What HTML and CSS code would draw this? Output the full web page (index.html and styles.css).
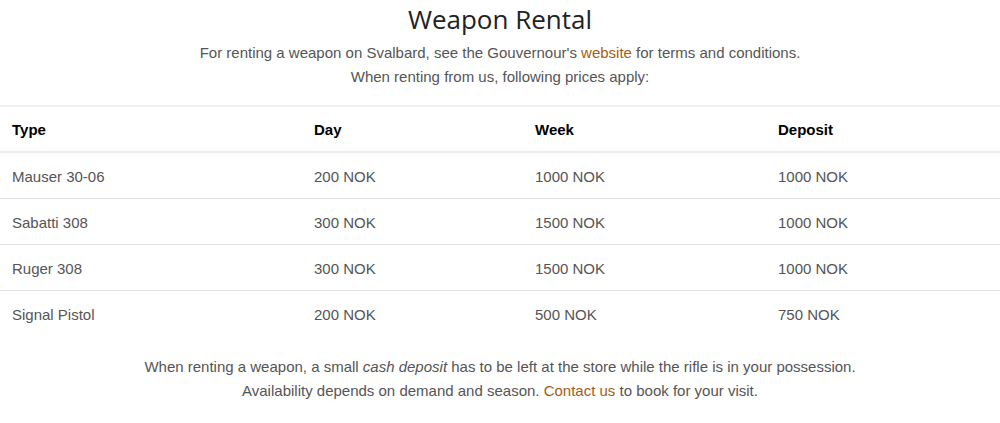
FILE: index.html
```html
<!DOCTYPE html>
<html lang="en">
<head>
<meta charset="utf-8">
<title>Weapon Rental</title>
<link rel="stylesheet" href="styles.css">
</head>
<body>
<section class="rental">
  <h1 class="title">Weapon Rental</h1>
  <p class="intro">For renting a weapon on Svalbard, see the Gouvernour's <a href="#" class="link">website</a> for terms and conditions.<br>When renting from us, following prices apply:</p>
  <table class="prices">
    <colgroup>
      <col class="c1"><col class="c2"><col class="c3"><col class="c4">
    </colgroup>
    <thead>
      <tr><th>Type</th><th>Day</th><th>Week</th><th>Deposit</th></tr>
    </thead>
    <tbody>
      <tr><td>Mauser 30-06</td><td>200 NOK</td><td>1000 NOK</td><td>1000 NOK</td></tr>
      <tr><td>Sabatti 308</td><td>300 NOK</td><td>1500 NOK</td><td>1000 NOK</td></tr>
      <tr><td>Ruger 308</td><td>300 NOK</td><td>1500 NOK</td><td>1000 NOK</td></tr>
      <tr><td>Signal Pistol</td><td>200 NOK</td><td>500 NOK</td><td>750 NOK</td></tr>
    </tbody>
  </table>
  <p class="outro">When renting a weapon, a small <em>cash deposit</em> has to be left at the store while the rifle is in your possession.<br>Availability depends on demand and season. <a href="#" class="link">Contact us</a> to book for your visit.</p>
</section>
</body>
</html>
```

FILE: styles.css
```css
html, body {
  margin: 0;
  padding: 0;
  background: #fff;
}
body {
  font-family: "Liberation Sans", Arial, sans-serif;
  font-size: 15px;
  color: #555;
}
.rental {
  display: flex;
  flex-direction: column;
  align-items: stretch;
}
.title {
  margin: 3px 0 0;
  font-family: "Open Sans", sans-serif;
  font-weight: 400;
  font-size: 26px;
  line-height: 32px;
  color: #222;
  text-align: center;
}
.intro, .outro {
  margin: 0;
  text-align: center;
  line-height: 24px;
}
.intro {
  margin-top: 6px;
}
.link {
  color: #a65c12;
  text-decoration: none;
}
.prices {
  width: 100%;
  border-collapse: collapse;
  margin-top: 16px;
}
.c1 { width: 302px; }
.c2 { width: 221px; }
.c3 { width: 243px; }
.c4 { width: 234px; }
.prices th, .prices td {
  text-align: left;
  padding: 1px 12px 0;
  height: 44px;
  vertical-align: middle;
  border-top: 1px solid #e3e3e3;
}
.prices th {
  color: #000;
  font-weight: 700;
  height: 43px;
  border-top: 2px solid #f0f0f0;
  border-bottom: 2px solid #ebebeb;
}
.prices td {
  color: #555;
}
.outro {
  margin-top: 19px;
}
```
